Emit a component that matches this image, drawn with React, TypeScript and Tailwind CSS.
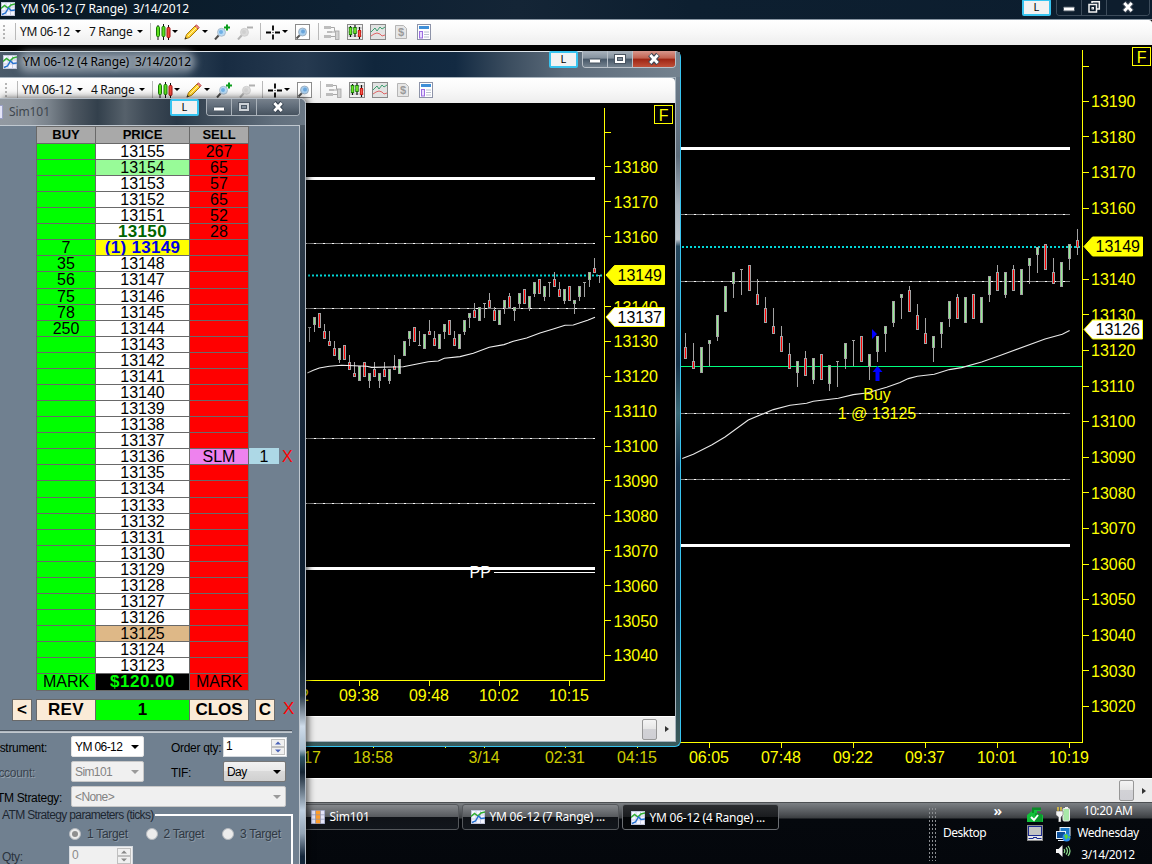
import React from "react";

type Bar = [high: number, top: number, bottom: number, low: number, kind: "g" | "r" | "n"];

const bars4: Bar[] = [
  [34, 34, 34, 30, "n"], [37, 37, 35, 33, "g"], [38, 38, 34, 34, "r"], [35, 33, 31, 31, "r"], [33, 30, 29, 29, "r"],
  [30, 28, 26, 26, "r"], [28, 28, 25, 24, "g"], [29, 29, 25, 25, "r"], [26, 24, 22, 22, "r"], [24, 21, 20, 20, "r"],
  [23, 23, 19, 19, "g"], [24, 24, 20, 20, "r"], [21, 21, 19, 17, "g"], [24, 22, 20, 20, "r"], [21, 21, 19, 17, "g"],
  [24, 22, 20, 20, "r"], [22, 22, 19, 18, "g"], [26, 23, 22, 22, "r"], [25, 25, 21, 21, "g"], [30, 30, 26, 26, "g"],
  [33, 33, 31, 29, "g"], [34, 34, 30, 30, "r"], [33, 29, 29, 29, "n"], [32, 32, 28, 28, "g"], [36, 33, 32, 32, "r"],
  [33, 31, 29, 29, "r"], [32, 32, 28, 28, "g"], [35, 35, 33, 31, "g"], [36, 36, 32, 32, "r"], [33, 31, 29, 29, "r"],
  [32, 32, 28, 28, "g"], [36, 36, 33, 32, "g"], [38, 38, 37, 34, "g"], [41, 39, 37, 37, "r"], [40, 40, 36, 36, "g"],
  [41, 41, 41, 37, "n"], [44, 42, 40, 40, "r"], [40, 39, 36, 36, "r"], [39, 39, 35, 35, "g"], [42, 42, 40, 38, "g"],
  [44, 43, 40, 40, "r"], [40, 40, 39, 36, "g"], [44, 44, 41, 40, "g"], [45, 45, 41, 41, "r"], [43, 43, 40, 39, "g"],
  [47, 47, 44, 43, "g"], [48, 48, 44, 44, "r"], [46, 46, 43, 42, "g"], [47, 47, 47, 43, "n"], [50, 48, 46, 46, "r"],
  [47, 45, 43, 43, "r"], [45, 45, 42, 41, "g"], [46, 46, 42, 42, "r"], [42, 42, 41, 38, "g"], [46, 46, 43, 42, "g"],
  [47, 47, 47, 43, "n"], [50, 50, 48, 46, "g"], [54, 51, 50, 50, "r"], [49, 49, 49, 47, "n"],
];

const bars7: Bar[] = [
  [25, 21, 18, 18, "r"], [22, 17, 15, 15, "r"], [21, 21, 14, 14, "g"], [23, 23, 22, 16, "g"], [30, 30, 24, 23, "g"],
  [38, 38, 31, 31, "g"], [42, 42, 39, 35, "g"], [43, 43, 43, 36, "n"], [44, 44, 37, 37, "r"], [40, 36, 33, 33, "r"],
  [35, 32, 28, 28, "r"], [32, 27, 25, 25, "r"], [27, 24, 20, 20, "r"], [22, 19, 15, 15, "r"], [17, 17, 14, 10, "g"],
  [20, 18, 13, 13, "r"], [18, 18, 12, 11, "g"], [19, 19, 12, 12, "r"], [16, 16, 11, 9, "g"], [17, 17, 17, 10, "n"],
  [22, 22, 18, 15, "g"], [23, 23, 23, 16, "n"], [24, 24, 17, 17, "r"], [19, 19, 15.6, 12, "g"], [24, 24, 20, 17, "g"],
  [27, 27, 25, 20, "g"], [34, 34, 28, 27, "g"], [36, 36, 35, 29, "g"], [38, 37, 31, 31, "r"], [33, 30, 26, 26, "r"],
  [29, 25, 22, 22, "r"], [24, 24, 21, 17, "g"], [28, 28, 25, 21, "g"], [34, 34, 29, 27, "g"], [36, 35, 29, 29, "r"],
  [35, 35, 28, 28, "g"], [36, 36, 29, 29, "r"], [35, 35, 28, 28, "g"], [41, 41, 36, 34, "g"], [44, 42, 37, 37, "r"],
  [42, 42, 36, 35, "g"], [44, 43, 37, 37, "r"], [43, 43, 36, 36, "g"], [46, 46, 44, 39, "g"], [49, 49, 47, 42, "g"],
  [50, 50, 43, 43, "r"], [46, 42, 39, 39, "r"], [45, 45, 38, 38, "g"], [50, 50, 46, 43, "g"], [54, 51, 49, 47, "r"],
];

const ma4 =
  "307.3,373 313.3,370.3 319.3,368 329.3,366.3 341.6,365.3 366.6,366.3 371.6,367.4 403.3,366.8 428.3,361.7 438.3,361 444.3,358.3 460,356.6 473.3,353.3 489.3,347.3 504,344.6 513.3,341.3 526.6,338 540,333 553.3,329 565,325.3 573.3,325 587.6,320.3 595,317.3";
const ma7 =
  "682.3,458.6 693.3,454.3 711.6,445 725,437 748.3,420 773.3,409.6 790,405.3 806.6,403.3 813.3,401.3 838.3,398.3 853.3,394.6 866.6,393 886.6,387.3 900,382.6 908.3,378.6 917.3,376.3 934.3,374.3 949.3,369.6 961.6,367.6 981.6,362 1000,355.6 1045,339 1062.3,334.3 1069.6,330.6";

const axisFont = "'Liberation Sans', Arial, sans-serif";

function Candles({ bars, x0, step, y }: { bars: Bar[]; x0: number; step: number; y: (p: number) => number }) {
  return (
    <g shapeRendering="crispEdges">
      {bars.map(([h, t, b, l, k], i) => {
        const x = x0 + step * i;
        const yt = Math.round(y(t));
        const yb = Math.round(y(b)) + 1;
        const yh = Math.round(y(h));
        const yl = Math.round(y(l)) + 1;
        return (
          <g key={i}>
            <rect x={x} y={yh} width={1} height={yl - yh} fill="#a3a3a3" />
            <rect x={x - 1} y={yt} width={3} height={yb - yt} fill="#a3a3a3" />
            {k !== "n" && <rect x={x} y={yt + 1} width={1} height={Math.max(1, yb - yt - 2)} fill={k === "g" ? "#90ee90" : "#ff0000"} />}
          </g>
        );
      })}
    </g>
  );
}

function Level({ y, x1, x2 }: { y: number; x1: number; x2: number }) {
  return (
    <g shapeRendering="crispEdges">
      <line x1={x1} x2={x2} y1={y} y2={y} stroke="#858585" />
      <line x1={x1} x2={x2} y1={y} y2={y} stroke="#fff" strokeDasharray="2 7" strokeDashoffset={-5} />
    </g>
  );
}

function PriceTag({ x, y, text, fill }: { x: number; y: number; text: string; fill: string }) {
  return (
    <g>
      <path d={`M${x} ${y} L${x + 8.5} ${y - 9.5} H${x + 58.5} V${y + 9.5} H${x + 8.5} Z`} fill={fill} stroke="#ffff00" />
      <text x={x + 11.5} y={y + 5.5} fill="#000">{text}</text>
    </g>
  );
}

function FBox({ x, y }: { x: number; y: number }) {
  return (
    <g>
      <rect x={x} y={y} width={18} height={18} fill="#000" stroke="#ffff00" shapeRendering="crispEdges" />
      <text x={x + 4.3} y={y + 15}>F</text>
    </g>
  );
}

function Chart7() {
  const y = (p: number) => 279.3 - (p - 40) * 3.56;
  const prices = Array.from({ length: 18 }, (_, i) => 13190 - i * 10).filter((p) => p !== 13150);
  const times: [number, string][] = [
    [301, "16:17"], [373, "18:58"], [445, ""], [484, "3/14"], [565, "02:31"], [637, "04:15"],
    [709, "06:05"], [781, "07:48"], [853, "09:22"], [925, "09:37"], [997, "10:01"], [1069, "10:19"],
  ];
  return (
    <svg className="block h-[733px] w-[1152px] bg-black" viewBox="0 45 1152 733" fontFamily={axisFont} fontSize={16} fill="#ffff00">
      <g stroke="#ffff00" shapeRendering="crispEdges">
        <path d="M1082.5 50V742.5H0" fill="none" />
        <path d="M1083 66.5h6" />
        {prices.map((p) => <path key={p} d={`M1083 ${Math.floor(y(p - 13100)) + 0.5}h6`} />)}
        {times.map(([x]) => <path key={x} d={`M${x + 0.5} 743v5`} />)}
      </g>
      {prices.map((p) => <text key={p} x={1091} y={y(p - 13100) + 5.7}>{p}</text>)}
      {times.map(([x, t]) => <text key={x} x={x} y={763} textAnchor="middle" fill={x < 680 ? "#cccc00" : "#ffff00"}>{t}</text>)}
      <path d="M0 148.5H1070M0 545.5H1070" stroke="#fff" strokeWidth={3} shapeRendering="crispEdges" />
      {[214.5, 281.5, 413.5, 479.5].map((v) => <Level key={v} y={v} x1={680} x2={1070} />)}
      <path d="M680 366.5H1082" stroke="#00ff7f" shapeRendering="crispEdges" />
      <path d="M682 247H1082" stroke="#00d8d8" strokeWidth={2} strokeDasharray="2 2" />
      <Candles bars={bars7} x0={685} step={8} y={y} />
      <polyline points={ma7} fill="none" stroke="#e8e8e8" strokeWidth={1.1} />
      <path d="M872 329l5 5-5 5zM877.5 366l5 6h-3v9h-4v-9h-3z" fill="#0000ff" />
      <text x={877} y={400} textAnchor="middle">Buy</text>
      <text x={877} y={419} textAnchor="middle">1 @ 13125</text>
      <PriceTag x={1084} y={246.5} text="13149" fill="#ffff00" />
      <PriceTag x={1084} y={329.5} text="13126" fill="#ffffff" />
      <FBox x={1132.5} y={47.5} />
    </svg>
  );
}

function Chart4() {
  const y = (p: number) => 341.4 - (p - 30) * 3.489;
  const prices = Array.from({ length: 15 }, (_, i) => 13180 - i * 10).filter((p) => p !== 13150);
  const times: [number, string][] = [[289, "09:32"], [359, "09:38"], [429, "09:48"], [499, "10:02"], [569, "10:15"]];
  return (
    <svg className="block h-[613px] w-[675px] bg-black" viewBox="0 103 675 613" fontFamily={axisFont} fontSize={16} fill="#ffff00">
      <g stroke="#ffff00" shapeRendering="crispEdges">
        <path d="M604.5 108V680.5H0" fill="none" />
        <path d="M605 132.5h6" />
        {prices.map((p) => <path key={p} d={`M605 ${Math.floor(y(p - 13100)) + 0.5}h6`} />)}
        {times.map(([x]) => <path key={x} d={`M${x + 0.5} 681v5`} />)}
      </g>
      {prices.map((p) => <text key={p} x={613.5} y={y(p - 13100) + 6}>{p}</text>)}
      {times.map(([x, t]) => <text key={x} x={x} y={701} textAnchor="middle">{t}</text>)}
      <path d="M0 178.5H595M0 568.5H595" stroke="#fff" strokeWidth={3} shapeRendering="crispEdges" />
      {[243.5, 308.5, 438.5, 503.5].map((v) => <Level key={v} y={v} x1={300} x2={595} />)}
      <path d="M300 275.5H604" stroke="#00d8d8" strokeWidth={2} strokeDasharray="2 2" />
      <Candles bars={bars4} x0={309} step={5} y={y} />
      <polyline points={ma4} fill="none" stroke="#f0f0f0" strokeWidth={1.1} />
      <path d="M494 572.5H595" stroke="#fff" shapeRendering="crispEdges" />
      <text x={469.5} y={578} fill="#fff">PP</text>
      <PriceTag x={606} y={275} text="13149" fill="#ffff00" />
      <PriceTag x={606} y={317} text="13137" fill="#ffffff" />
      <FBox x={654.5} y={105.5} />
    </svg>
  );
}

function ChartIcon() {
  return (
    <svg className="size-[14px] shrink-0" viewBox="0 0 14 14">
      <rect x=".5" y=".5" width="13" height="13" fill="#f4f6ff" stroke="#c3c8dc" />
      <path d="M.5 5h13M.5 9h13M5 .5v13M9.500 .5v13" stroke="#c9cde4" />
      <path d="M0 6.500l3.500-3 3.500 2.500 3-3 4-1" fill="none" stroke="#2fae2f" strokeWidth="1.500" />
      <path d="M1 12.500l3.500-1.500 3-5 2.500 2.500 4-.500" fill="none" stroke="#2270d0" strokeWidth="1.400" />
    </svg>
  );
}

function GridIcon() {
  return (
    <svg className="size-[14px] shrink-0" viewBox="0 0 14 14">
      <rect width="14" height="14" fill="#e4e4f8" />
      <rect x="4.500" width="5" height="14" fill="#ff9d2a" />
      <path d="M0 .5h14M0 4.800h14M0 9.200h14M0 13.500h14M.5 0v14M4.500 0v14M9.500 0v14M13.500 0v14" stroke="#8d93b5" strokeWidth=".7" />
    </svg>
  );
}

function Caret() {
  return <span className="h-0 w-0 shrink-0 border-x-[3px] border-t-[3px] border-x-transparent border-t-black" />;
}
function Sep() {
  return <span className="h-[17px] w-px shrink-0 bg-[#b9b9b9]" />;
}

const icon = "size-4 shrink-0";

function CandlesIcon() {
  return (
    <svg className={icon} viewBox="0 0 16 16">
      <path d="M3 1v15M8.500 0v16M13.500 1v15" stroke="#111" />
      <rect x="1.500" y="2.500" width="3" height="10" rx="1" fill="#5ee01c" stroke="#187a08" />
      <rect x="7" y="2.500" width="3" height="10" rx="1" fill="#5ee01c" stroke="#187a08" />
      <rect x="12" y="3.500" width="3" height="10" rx="1" fill="#f04a3c" stroke="#a01010" />
    </svg>
  );
}
function PencilIcon() {
  return (
    <svg className={icon} viewBox="0 0 16 16">
      <path d="M1 15l1.500-4.500L11 2l3 3-8.500 8.500z" fill="#ffd22e" stroke="#a87a10" />
      <path d="M11 2l1.500-1.200 2.700 2.700L14 5z" fill="#f08080" stroke="#b04848" strokeWidth=".8" />
      <path d="M4 12L12.500 3.500" stroke="#fff3a8" />
      <path d="M.5 15.500l1-2.500 1.600 1.600z" fill="#333" />
    </svg>
  );
}
function Lens({ gray, sign }: { gray?: boolean; sign?: "+" | "-" }) {
  return (
    <svg className={icon} viewBox="0 0 16 16">
      <path d="M1 15.500L5 11" stroke={gray ? "#b5b5b5" : "#4d4d4d"} strokeWidth="2" />
      <circle cx="7.500" cy="8.300" r="4" fill={gray ? "#dadada" : "#b7daf5"} stroke={gray ? "#cccccc" : "#a3b2c0"} strokeWidth=".8" />
      <circle cx="7" cy="8" r="2" fill={gray ? "#cfcfcf" : "#6fb0e6"} />
      {sign === "+" && <path d="M10 3.500h6M13 .5v6" stroke="#0b9d1c" strokeWidth="2" />}
      {sign === "-" && <path d="M10 3.500h6" stroke="#b0b0b0" strokeWidth="2" />}
    </svg>
  );
}
function CrossIcon() {
  return (
    <svg className={icon} viewBox="0 0 16 16">
      <path d="M1 8.500h5M10 8.500h5M8 1.500v5M8 10.500v5" stroke="#000" strokeWidth="1.800" />
      <rect x="7.500" y="8" width="1" height="1" />
    </svg>
  );
}
function BoxLensIcon() {
  return (
    <svg className={icon} viewBox="0 0 16 16">
      <rect x="1.500" y=".5" width="14" height="15" fill="#fff" stroke="#8c8c8c" />
      <path d="M2.500 14.500L6 11" stroke="#555" strokeWidth="2" />
      <circle cx="8.500" cy="8" r="4" fill="#a9cfee" stroke="#95a5b5" strokeWidth=".8" />
      <circle cx="9" cy="7.500" r="2" fill="#6aa5db" />
    </svg>
  );
}
function DomIcon() {
  return (
    <svg className={icon} viewBox="0 0 16 16">
      <path d="M0 2h7v3H0zM3 7h5v2H3zM0 11h7v3H0z" fill="#bdbdbd" />
      <path d="M7 3.500h3.500v4M8 8h3M7 12.500h4" fill="none" stroke="#a8a8a8" />
      <rect x="11.500" y="7" width="3.500" height="8.500" fill="#d2d2d2" stroke="#a2a2a2" strokeWidth=".8" />
    </svg>
  );
}
function BoxCandlesIcon() {
  return (
    <svg className={icon} viewBox="0 0 16 16">
      <rect x=".5" y=".5" width="15" height="15" fill="#f0f0f0" stroke="#8a8a8a" />
      <path d="M1 4h14M1 8h14M1 12h14" stroke="#bdbdbd" />
      <path d="M3.500 2v11M8 1v12M12.500 3v12" stroke="#111" strokeWidth="1.200" />
      <path d="M3.500 3v8M8 3v7" stroke="#187a08" strokeWidth="3.400" />
      <path d="M3.500 4v6M8 4v5" stroke="#6fe82c" strokeWidth="1.800" />
      <path d="M12.500 6v7" stroke="#c91c14" strokeWidth="3.200" />
      <path d="M12.500 7v5" stroke="#f4584e" strokeWidth="1.400" />
    </svg>
  );
}
function BoxLinesIcon() {
  return (
    <svg className={icon} viewBox="0 0 16 16">
      <rect x=".5" y=".5" width="15" height="15" fill="#e2e2e2" stroke="#8a8a8a" />
      <path d="M1 8l4-4 2 3 3-4 2 2 3-2" fill="none" stroke="#3d9f70" />
      <path d="M1 12l3-2 3-1 3 1 2 2 3-1" fill="none" stroke="#e06666" />
    </svg>
  );
}
function DollarIcon() {
  return (
    <svg className={icon} viewBox="0 0 16 16">
      <path d="M2.500 1.500h8l3 3v10h-11z" fill="#e6e6e6" stroke="#b5b5b5" />
      <text x="8" y="12.300" fontSize="11" textAnchor="middle" fontFamily={axisFont} fontWeight="700" fill="#9a9a9a">$</text>
    </svg>
  );
}
function PanelIcon() {
  return (
    <svg className={icon} viewBox="0 0 16 16">
      <rect x="1.500" y=".5" width="13" height="15" fill="#fff" stroke="#8d93a8" />
      <rect x="3" y="2" width="10" height="3" fill="#3f8fd8" />
      <rect x="3.500" y="7.500" width="3" height="6.500" fill="#eadcff" stroke="#9a6de0" />
      <path d="M8 8h5M8 10.500h5M8 13h5" stroke="#b8c0d0" />
    </svg>
  );
}

function Toolbar({ range, className }: { range: string; className: string }) {
  return (
    <div className={`flex h-[25px] items-center bg-gradient-to-b from-white via-[#f8f8f8] to-[#ededed] pb-[2px] font-['Noto_Sans','Open_Sans',sans-serif] text-[12px] text-[#111] ${className}`}>
      <span className="mr-[10px] ml-[3px] h-[14px] w-[2px] border-l-2 border-dotted border-[#b5b5b5]" />
      <Sep />
      <span className="ml-[4px] w-[53px] whitespace-nowrap tracking-[-0.3px]">YM 06-12</span>
      <span className="ml-[2px] flex"><Caret /></span>
      <span className="ml-[8px] w-[46px] whitespace-nowrap tracking-[-0.35px]">{range}</span>
      <span className="ml-[2px] flex"><Caret /></span>
      <span className="ml-[7px] flex"><Sep /></span>
      <span className="ml-[4px] flex"><CandlesIcon /></span>
      <span className="ml-px flex"><Caret /></span>
      <span className="ml-[6px] flex"><PencilIcon /></span>
      <span className="ml-[2px] flex"><Caret /></span>
      <span className="ml-[6px] flex"><Lens sign="+" /></span>
      <span className="ml-[7px] flex"><Lens gray sign="-" /></span>
      <span className="ml-[7px] flex"><Sep /></span>
      <span className="ml-[4px] flex"><CrossIcon /></span>
      <span className="ml-[1px] flex"><Caret /></span>
      <span className="ml-[6px] flex"><BoxLensIcon /></span>
      <span className="ml-[8px] flex"><Sep /></span>
      <span className="ml-[5px] flex"><DomIcon /></span>
      <span className="ml-[7px] flex"><BoxCandlesIcon /></span>
      <span className="ml-[7px] flex"><BoxLinesIcon /></span>
      <span className="ml-[7px] flex"><DollarIcon /></span>
      <span className="ml-[7px] flex"><PanelIcon /></span>
    </div>
  );
}

function Caption({ tone, restore, gap }: { tone: "dark" | "glass" | "red"; restore?: boolean; gap: string }) {
  const base =
    tone === "dark"
      ? "bg-[#0d1d2d] border-[#3d4c5b]"
      : tone === "glass"
        ? "bg-gradient-to-b from-[#77818c] via-[#5f6b78] to-[#47535f] border-[#aab2ba]"
        : "bg-[linear-gradient(#a9b3bd,#83909d_45%,#465667_50%,#74828f)] border-[#b9c1c9]";
  const close = tone === "red" ? "bg-[linear-gradient(#d8978c,#c2614f_45%,#9d2413_50%,#c05039)] border-[#b9c1c9]" : base;
  return (
    <div className="flex items-start">
      <div className="flex h-[17px] w-[29px] items-center justify-center rounded-[2px] border-2 border-[#38c4f0] bg-[#f2f2f2] font-['Noto_Sans',sans-serif] text-[11px] text-black">L</div>
      <div className={`flex h-[17px] overflow-hidden rounded-b-[4px] border border-t-0 ${gap} ${base}`}>
        <div className={`flex w-[25px] items-center justify-center border-r ${base}`}>
          <svg className="h-[14px] w-[14px]" viewBox="0 0 14 14"><rect x="1.500" y="7" width="11" height="4" rx=".5" fill="#fff" stroke="#4b5663" /></svg>
        </div>
        <div className={`flex w-[25px] items-center justify-center border-r ${base}`}>
          {restore ? (
            <svg className="h-[14px] w-[14px]" viewBox="0 0 14 14" fill="none" stroke="#f2f2f2" strokeWidth="1.500"><path d="M5 3V1.700h7.300V9H10" /><rect x="2" y="4.500" width="7.500" height="7.500" /><rect x="5" y="7.500" width="1.500" height="1.500" strokeWidth="1" /></svg>
          ) : (
            <svg className="h-[14px] w-[14px]" viewBox="0 0 14 14"><rect x="1.500" y="2.500" width="11" height="9" fill={tone === "glass" ? "#ccd1d6" : "#fff"} stroke="#4b5663" /><rect x="4.500" y="5.500" width="5" height="3" fill="#7e8b98" stroke="#4b5663" /></svg>
          )}
        </div>
        <div className={`flex w-[42px] items-center justify-center ${close}`}>
          <svg className="h-[14px] w-[16px]" viewBox="0 0 16 14"><path d="M4 2.500l8 9M12 2.500l-8 9" stroke="#3f4a57" strokeWidth="5" /><path d="M4.300 3l7.400 8M11.700 3l-7.400 8" stroke="#fff" strokeWidth="2.800" /></svg>
        </div>
      </div>
    </div>
  );
}

function Scrollbar({ className }: { className: string }) {
  return (
    <div className={`flex items-center justify-end border-t border-white bg-[#ececec] ${className}`}>
      <div className="h-[21px] w-[15px] rounded-[2px] border border-[#979797] bg-[linear-gradient(#f4f4f4,#e6e6e6_48%,#d2d2d6_50%,#cfcfd4)]" />
      <span className="mr-[6px] ml-[8px] h-0 w-0 border-y-[3px] border-l-[4px] border-y-transparent border-l-[#333]" />
    </div>
  );
}

const asks: Record<number, string> = { 13155: "267", 13154: "65", 13153: "57", 13152: "65", 13151: "52", 13150: "28" };
const bids: Record<number, string> = { 13149: "7", 13148: "35", 13147: "56", 13146: "75", 13145: "78", 13144: "250" };

function Ladder() {
  const rows = Array.from({ length: 33 }, (_, i) => 13155 - i);
  return (
    <div className="ml-[36px] flex w-[264px] flex-col font-['Liberation_Sans',Arial,sans-serif] text-[16px] leading-[16px] text-black">
      <div className="flex h-[16.600px] w-[213px] divide-x divide-[#696969] border border-b-0 border-[#696969] bg-[#a9a9a9] text-center text-[13px] font-bold">
        <span className="w-[59px]">BUY</span>
        <span className="w-[94px]">PRICE</span>
        <span className="grow">SELL</span>
      </div>
      {rows.map((p) => {
        let price = "bg-white";
        if (p === 13154) price = "bg-[#98fb98]";
        if (p === 13150) price = "bg-white text-[#006400] font-bold text-[17px] tracking-[0.3px]";
        if (p === 13149) price = "bg-[#ffff00] text-[#0000e6] font-bold text-[17px] tracking-[0.3px]";
        if (p === 13125) price = "bg-[#deb887]";
        return (
          <div key={p} className="flex h-[16.080px] text-center">
            <div className="flex w-[213px] divide-x divide-[#696969] border-x border-t border-[#696969]">
              <span className="w-[59px] bg-[#00ff00]">{bids[p] ?? ""}</span>
              <span className={`w-[94px] whitespace-nowrap ${price}`}>{p === 13149 ? "(1) 13149" : p}</span>
              <span className={`grow ${p === 13136 ? "bg-[#ee82ee]" : "bg-[#ff0000]"}`}>{p === 13136 ? "SLM" : asks[p] ?? ""}</span>
            </div>
            {p === 13136 && (
              <>
                <span className="w-[30px] bg-[#add8e6] pt-px">1</span>
                <span className="ml-[3px] pt-px text-[#ff0000]">X</span>
              </>
            )}
          </div>
        );
      })}
      <div className="flex h-[17.800px] w-[213px] divide-x divide-[#696969] border border-[#696969] text-center leading-[16px]">
        <span className="w-[59px] bg-[#00ff00]">MARK</span>
        <span className="w-[94px] bg-black text-[17px] font-bold tracking-[0.5px] text-[#00ff00]">$120.00</span>
        <span className="grow bg-[#ff0000]">MARK</span>
      </div>
    </div>
  );
}

function Combo({ text, w, disabled, plain }: { text: string; w: string; disabled?: boolean; plain?: boolean }) {
  return (
    <div className={`flex h-[21px] items-center justify-between rounded-[2px] border px-[3px] ${w} ${disabled ? "border-[#c8c8c8] bg-[#f0f0f0] text-[#838383]" : plain ? "border-[#e4e4e4] bg-white text-black" : "border-[#777] bg-[linear-gradient(#f2f2f2,#e8e8e8_48%,#dadada_50%,#d0d0d0)] text-black"}`}>
      <span className="tracking-[-0.6px]">{text}</span>
      <span className={`mr-px h-0 w-0 border-x-[4px] border-t-[4px] border-x-transparent ${disabled ? "border-t-[#9a9a9a]" : "border-t-black"}`} />
    </div>
  );
}

function Spinner({ text, disabled }: { text: string; disabled?: boolean }) {
  const arrow = disabled ? "#888" : "#4a63b8";
  return (
    <div className={`flex h-[20px] w-[64px] justify-between border border-[#d5dae0] p-px pl-[2px] ${disabled ? "bg-[#f0f0f0] text-[#8a8a8a]" : "bg-white text-black"}`}>
      <span className="leading-[15px]">{text}</span>
      <svg className="h-[16px] w-[14px]" viewBox="0 0 14 16">
        <rect x=".5" y=".5" width="13" height="7" fill="#f0f0f0" stroke="#c0c0c0" />
        <rect x=".5" y="8.500" width="13" height="7" fill="#f0f0f0" stroke="#c0c0c0" />
        <path d="M4 5.500h6l-3-3zM4 10.500h6l-3 3z" fill={arrow} />
      </svg>
    </div>
  );
}

function Radio({ label, on }: { label: string; on?: boolean }) {
  return (
    <div className="flex w-[76.500px] shrink-0 items-center gap-[6px] whitespace-nowrap text-[#2f3843]">
      <span className="flex size-[12px] shrink-0 items-center justify-center rounded-full border border-[#b5b9be] bg-[#ececec]">
        {on && <span className="size-[6px] rounded-full bg-[#8f8f8f]" />}
      </span>
      <span className="tracking-[-0.3px] [text-shadow:1px_1px_0_#8d9aa7]">{label}</span>
    </div>
  );
}

function SimWindow() {
  return (
    <div className="absolute top-[98px] left-0 flex h-[766px] w-[306px] flex-col rounded-tr-[6px] border-t border-r border-[#b4bcc5] bg-[linear-gradient(#66717d,#3c4955_6%,#2b3947_20%,#152537_45%,#0d1e2f_70%,#2a3a48_78%,#cfdcea_82%,#a9bccd_85%,#2e5566_86%,#152433_88%,#c0d0e0_93%,#93a4b5_96%,#14263a_99%)] shadow-[2px_0_7px_rgba(0,0,0,0.65)]">
      <div className="flex h-[27px] items-start justify-between rounded-tr-[5px] bg-[linear-gradient(90deg,#9299a1,#8e969e_10%,#7a838c_16%,#4e5862_24%,#33404c_32%,#56616b_41%,#3f4b57_48%,#2a3846_58%,#43515f_72%,#62707e_90%,#6a7784)] pr-[5px]">
        <div className="flex items-center pt-[4px]">
          <span className="h-[14px] w-[3px] border-y border-r border-[#9aa0c4] bg-[#e4e4f8]" />
          <span className="ml-[6px] font-['Noto_Sans',sans-serif] text-[12px] tracking-[-0.1px] text-[#3e464e]">Sim101</span>
        </div>
        <Caption tone="glass" gap="ml-[7px]" />
      </div>
      <div className="w-[300px] grow overflow-hidden border-t border-r border-[#c0c8d0] bg-[#708090]">
        <Ladder />
        <div className="mt-[8px] ml-[12px] flex h-[22px] font-['Liberation_Sans',Arial,sans-serif] text-[17px] leading-[20px] text-black [&>b]:border [&>b]:border-[#696969] [&>b]:bg-[#faebd7] [&>b]:text-center">
          <b className="w-[20px]">&lt;</b>
          <b className="ml-[4px] w-[60px] tracking-[0.4px]">REV</b>
          <b className="ml-[-1px] w-[95px] !bg-[#00ff00]">1</b>
          <b className="ml-[-1px] w-[60px]">CLOS</b>
          <b className="ml-[6px] w-[20px]">C</b>
          <span className="ml-[8px] text-[17px] text-[#ff0000]">X</span>
        </div>
        <div className="mt-[9px] h-[3px] w-[292px] border-t border-b border-t-[#4a545f] border-b-[#c2c8ce] bg-[#b0b8c0]" />
        <div className="flex flex-col font-['Liberation_Sans',Arial,sans-serif] text-[12px] tracking-[-0.3px] text-black">
          <div className="mt-[3px] flex h-[21px] items-center">
            <span className="flex w-[47px] justify-end pt-[2px] whitespace-nowrap">Instrument:</span>
            <div className="ml-[24px]"><Combo plain text="YM 06-12" w="w-[73px]" /></div>
            <span className="ml-[27px] w-[52px] pt-[2px] whitespace-nowrap">Order qty:</span>
            <Spinner text="1" />
          </div>
          <div className="mt-[4px] flex h-[21px] items-center">
            <span className="flex w-[35px] justify-end pt-[2px] text-[#39434e] [text-shadow:1px_1px_0_#96a2ae]">Account:</span>
            <div className="ml-[36px]"><Combo disabled text="Sim101" w="w-[73px]" /></div>
            <span className="ml-[27px] w-[52px] pt-[2px]">TIF:</span>
            <Combo text="Day" w="w-[63px]" />
          </div>
          <div className="mt-[4px] flex h-[21px] items-center">
            <span className="flex w-[62px] justify-end pt-[2px] whitespace-nowrap">ATM Strategy:</span>
            <div className="ml-[9px]"><Combo disabled text="<None>" w="w-[215px]" /></div>
          </div>
          <div className="flex h-[16px] items-center text-[#1d2630]">
            <span className="w-[155px] shrink-0 pl-[2px] whitespace-nowrap tracking-[-0.65px]">ATM Strategy parameters (ticks)</span>
            <span className="h-[2px] w-[138px] bg-white" />
          </div>
          <div className="-mt-[7px] flex h-[70px] w-[293px] flex-col border-r-2 border-white pt-[9px]">
            <div className="flex pl-[69px]">
              <Radio label="1 Target" on />
              <Radio label="2 Target" />
              <Radio label="3 Target" />
            </div>
            <div className="mt-[3px] flex items-center pl-[2px] text-[#2a333d]">
              <span className="w-[67px] pt-[2px]">Qty:</span>
              <Spinner text="0" disabled />
            </div>
          </div>
        </div>
      </div>
    </div>
  );
}

function TaskButton({ text, iconEl, active }: { text: string; iconEl: React.ReactNode; active?: boolean }) {
  return (
    <div className={`flex h-[26px] w-[157px] items-center gap-[5px] rounded-[3px] border pl-[8px] ${active ? "border-[#6b6e72] bg-[linear-gradient(#2c2e31,#1a1c1f_50%,#040608_52%,#050709)] pt-px" : "border-[#55585c] bg-[linear-gradient(#85888c,#56595d_50%,#101318_52%,#12161c)]"}`}>
      {iconEl}
      <span className="whitespace-nowrap tracking-[-0.25px]">{text}</span>
    </div>
  );
}

function Taskbar() {
  return (
    <div className="absolute top-[802px] left-0 flex h-[62px] w-[1152px] border-t border-[#4d5053] bg-[linear-gradient(#7c8084,#4a4d51_12px,#3a3d40_15px,#05080d_16px,#04070c)] font-['Noto_Sans','Open_Sans',sans-serif] text-[12px] text-white">
      <div className="flex w-[928px] gap-[3px] pt-px pl-[301.500px]">
        <TaskButton text="Sim101" iconEl={<GridIcon />} />
        <TaskButton text="YM 06-12 (7 Range) ..." iconEl={<ChartIcon />} />
        <TaskButton text="YM 06-12 (4 Range) ..." iconEl={<ChartIcon />} active />
      </div>
      <div className="mt-[4px] h-[54px] w-[8px] bg-[radial-gradient(#8b8e92_0.7px,transparent_0.9px)] [background-size:3px_4px]" />
      <div className="flex w-[91px] flex-col pl-[7px]">
        <span className="mt-[-2px] h-[21px] self-end pr-[25px] text-[15px] leading-[19px] font-semibold">»</span>
        <span className="leading-[21px] tracking-[-0.5px]">Desktop</span>
      </div>
      <div className="flex w-[29px] flex-col gap-[3px] pt-[4px]">
        <svg className="h-[15px] w-4" viewBox="0 0 16 15"><path d="M0 8l5-4V1h9v3h-4v3l6 1v7H0z" fill="#12c03a" /><path d="M8 6l7 1v8H8z" fill="#0a9a2c" /><path d="M5 .5h9v2.500H7v3H5z" fill="#0a8a28" /><path d="M4 10l3 3 4-5" stroke="#fff" strokeWidth="2" fill="none" /></svg>
        <svg className="size-4" viewBox="0 0 16 16"><rect x=".5" y=".5" width="15" height="15" fill="#e8e8e8" stroke="#8a8a8a" /><rect x="1.500" y="1.500" width="13" height="9" fill="#c4c4c4" stroke="#1c2a90" /><path d="M1.500 13.500h5M9.500 13.500h5" stroke="#1c2a90" strokeWidth="1" /><path d="M6 12.500h4" stroke="#1c2a90" /></svg>
      </div>
      <div className="flex w-[20px] flex-col gap-[5px] pt-[4px]">
        <svg className="h-[15px] w-[15px]" viewBox="0 0 15 15"><rect x="7" y="1.500" width="6.500" height="12.500" rx="1" fill="#a8e8a8" stroke="#eee" /><rect x="9" y="0" width="3" height="2" fill="#eee" /><path d="M2 0v4M5 0v4" stroke="#f4d03c" strokeWidth="1.400" /><path d="M0 4h7v4l-2 2v5H2.500v-5L0 8z" fill="#f5f5f5" stroke="#555" strokeWidth=".5" /></svg>
        <svg className="h-[15px] w-[15px]" viewBox="0 0 15 15"><rect x="4" y=".5" width="10" height="8" fill="#1a78c8" stroke="#e8f2fa" /><rect x=".5" y="4.500" width="9" height="7" fill="#0c4f9c" stroke="#e8f2fa" /><path d="M2 13.500h6" stroke="#e8f2fa" /><circle cx="10.500" cy="10.500" r="4" fill="#2a8cf0" /><path d="M8 8l3-1 1 3-2 3zM12 10l2-1v3z" fill="#58d63a" /></svg>
        <svg className="-mt-[3px] h-[14px] w-[15px]" viewBox="0 0 15 14"><path d="M0 5h2.500L6.500 1v12L2.500 9H0z" fill="#f5f5f5" /><path d="M8 5q1.500 2 0 4M10 3.500q3 3.500 0 7M12 2q4 5 0 10" fill="none" stroke="#8fe08f" strokeWidth="1.200" /></svg>
      </div>
      <div className="flex w-[64px] flex-col items-center leading-[22px] tracking-[-0.4px] whitespace-nowrap">
        <span className="mt-[-3px]">10:20 AM</span>
        <span>Wednesday</span>
        <span>3/14/2012</span>
      </div>
    </div>
  );
}

export default function App() {
  return (
    <div className="relative h-[864px] w-[1152px] overflow-hidden bg-black">
      <div className="flex w-[1152px] flex-col">
        <div className="flex h-[20px] items-start justify-between border-b border-[#8996a3] bg-[linear-gradient(90deg,#081824,#0d2032_30%,#142536_45%,#0d1f30_60%,#0c1d2e)] pr-[2px]">
          <div className="flex items-center gap-[6px] pl-px font-['Noto_Sans','Open_Sans',sans-serif] text-[12px] tracking-[-0.12px] text-white">
            <ChartIcon />
            <span className="whitespace-pre">YM 06-12 (7 Range)  3/14/2012</span>
          </div>
          <div className="-mt-px"><Caption tone="dark" restore gap="ml-[5px]" /></div>
        </div>
        <Toolbar range="7 Range" className="rounded-tr-[3px]" />
        <Chart7 />
        <Scrollbar className="h-[24px]" />
      </div>
      <Taskbar />
      <div className="absolute top-[51px] left-0 flex h-[696px] w-[681px] flex-col rounded-r-[6px] border-t border-r border-b border-[#38c4f0] border-t-[#dfe6ec] bg-[linear-gradient(#6f7f8e,#5c6a78_15%,#a9b4be_22%,#c0c8d0_27%,#24465c_28%,#16324a_45%,#3b6a78_52%,#14304a_60%,#0f2a42_80%,#3b5b5c)]">
        <div className="flex h-[25px] items-start justify-between bg-[linear-gradient(90deg,#4a5a69,#33475b_25%,#182c42_33%,#263a50_45%,#10263c_55%,#132a42_67%,#3c4e60_75%,#5d6c7b_83%,#74828f)] pr-[4px]">
          <div className="flex items-center gap-[6px] pt-[3px] pl-[3px]">
            <ChartIcon />
            <span className="rounded-full bg-[#aeb8c1]/60 font-['Noto_Sans','Open_Sans',sans-serif] text-[12px] leading-[12px] tracking-[-0.12px] whitespace-pre text-black shadow-[0_0_7px_5px_rgba(174,184,193,0.6)] [text-shadow:0_0_5px_#c4ccd3]">YM 06-12 (4 Range)  3/14/2012</span>
          </div>
          <div className="-mt-px"><Caption tone="red" gap="ml-[4px]" /></div>
        </div>
        <div className="flex w-[676px] flex-col border-t border-r border-b border-[#a8b4be]">
          <Toolbar range="4 Range" className="rounded-tr-[4px] pl-[2px]" />
          <Chart4 />
          <Scrollbar className="h-[25px]" />
        </div>
      </div>
      <SimWindow />
    </div>
  );
}
